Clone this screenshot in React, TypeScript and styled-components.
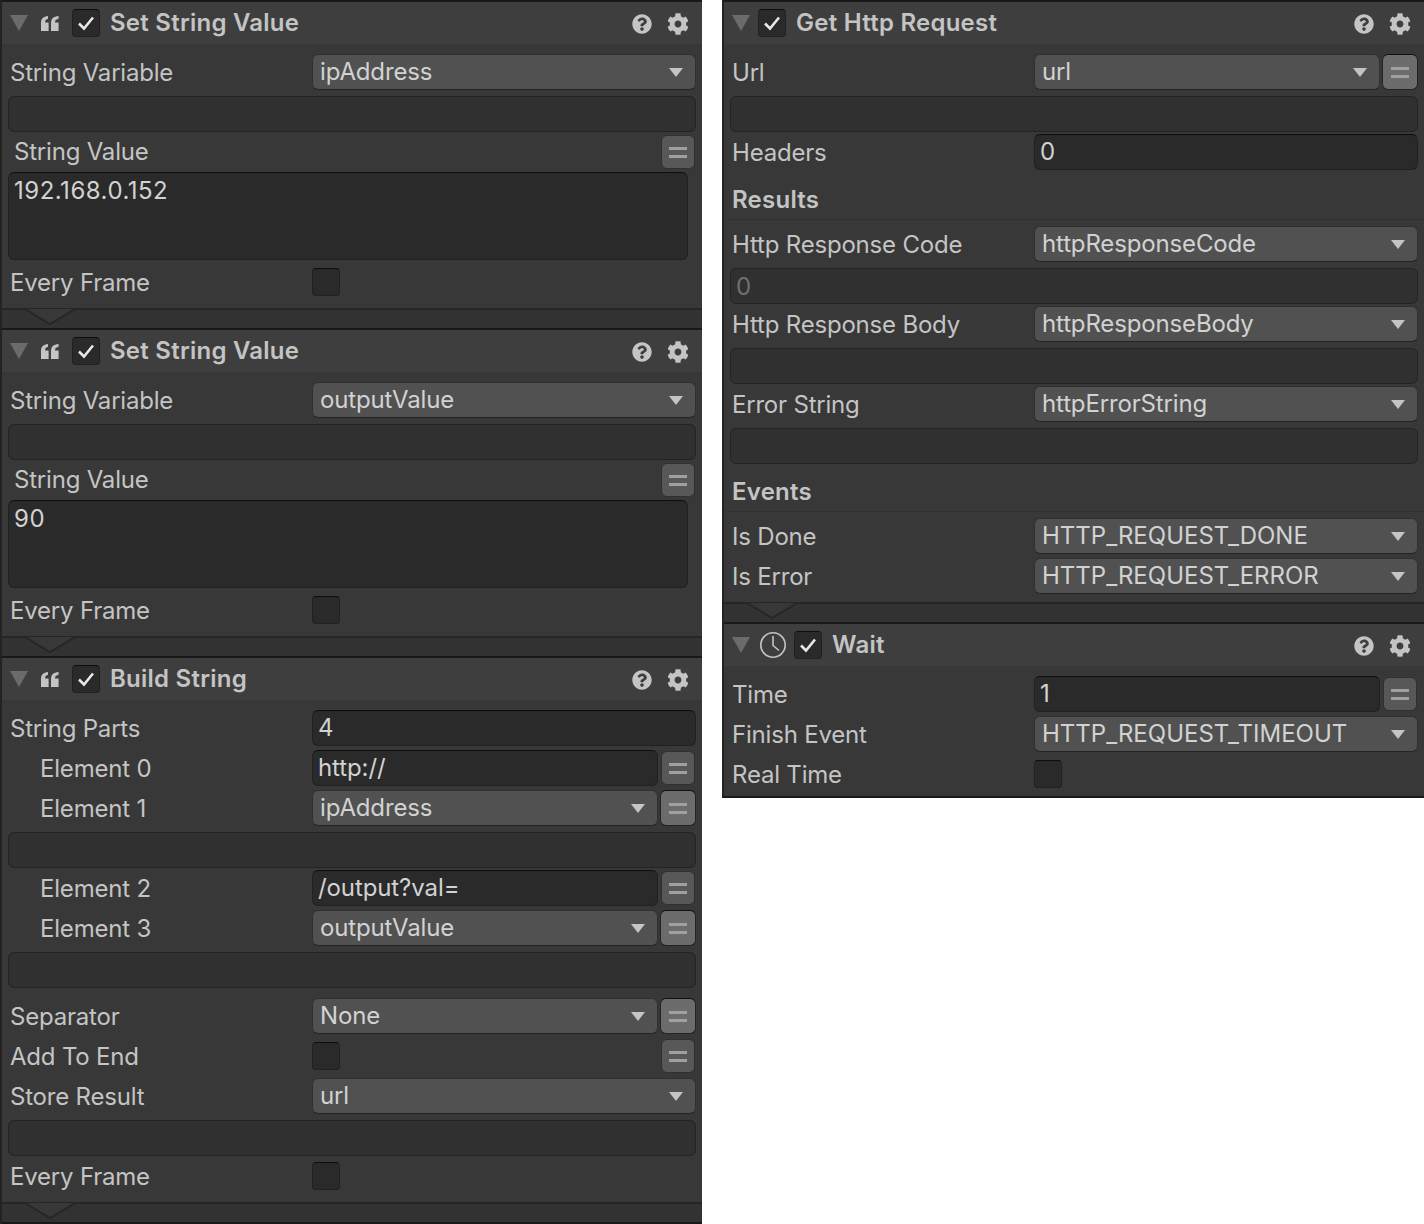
import React from 'react'
import styled, { createGlobalStyle } from 'styled-components'
import { FaCog, FaQuestionCircle } from 'react-icons/fa'

const GlobalStyle = createGlobalStyle`
  html, body {
    margin: 0;
    padding: 0;
    background: #fff;
  }
  * {
    box-sizing: border-box;
  }
`

const Page = styled.div`
  display: flex;
  align-items: flex-start;
  gap: 20px;
  width: 1424px;
  font-family: Inter, 'Noto Sans', sans-serif;
  font-size: 24px;
  color: #c4c4c4;
`

const Panel = styled.div`
  width: 702px;
  flex: none;
  background: #383838;
  border-left: 2px solid #232323;
`

const Header = styled.div`
  display: flex;
  align-items: center;
  height: 44px;
  padding-right: 12px;
  background: #3e3e3e;
  border-top: 2px solid #191919;
`

const Fold = styled.span`
  flex: none;
  width: 0;
  height: 0;
  margin-left: 8px;
  border-left: 9px solid transparent;
  border-right: 9px solid transparent;
  border-top: 16px solid #6b6b6b;
`

const Title = styled.span`
  flex: 1;
  margin-left: 10px;
  font-weight: 600;
  line-height: 28px;
  letter-spacing: 0.25px;
`

const HeaderIcon = styled.span`
  display: flex;
  flex: none;
  width: 24px;
  justify-content: center;
  margin: 2px 0 0 12px;
  color: #c4c4c4;
`

const IconSlot = styled.span`
  display: flex;
  flex: none;
  width: 36px;
  padding-left: 8px;
  justify-content: center;
`

const CheckBox = styled.span<{ $header?: boolean }>`
  display: flex;
  flex: none;
  align-items: center;
  justify-content: center;
  width: 28px;
  height: 28px;
  margin-left: ${p => (p.$header ? '8px' : '0')};
  background: #2a2a2a;
  border: 1px solid #212121;
  border-top-color: #0d0d0d;
  border-radius: 4px;
`

const Body = styled.div`
  padding: 8px 6px 0 0;
`

const Row = styled.div`
  display: flex;
  align-items: center;
  height: 40px;
`

const Label = styled.span<{ $indent?: boolean }>`
  flex: none;
  width: 310px;
  padding: 2px 0 0 ${p => (p.$indent ? '38px' : '8px')};
  line-height: 28px;
  letter-spacing: -0.2px;
`

const Values = styled.div<{ $spread?: boolean }>`
  display: flex;
  flex: 1;
  align-items: center;
  justify-content: ${p => (p.$spread ? 'space-between' : 'flex-start')};
  gap: 2px;
`

const Field = styled.div`
  flex: 1;
  height: 36px;
  padding-left: 5px;
  background: #2a2a2a;
  border: 1px solid #212121;
  border-top-color: #0d0d0d;
  border-radius: 6px;
  line-height: 34px;
  letter-spacing: -0.1px;
  color: #d2d2d2;
`

const Dropdown = styled.div<{ $caps?: boolean }>`
  display: flex;
  flex: 1;
  align-items: center;
  justify-content: space-between;
  height: 36px;
  padding: 0 12px 0 7px;
  background: #515151;
  border: 1px solid #303030;
  border-bottom-color: #242424;
  border-radius: 6px;
  line-height: 34px;
  letter-spacing: ${p => (p.$caps ? '0' : '-0.15px')};
  color: #d2d2d2;
`

const Arrow = styled.span`
  width: 0;
  height: 0;
  border-left: 7px solid transparent;
  border-right: 7px solid transparent;
  border-top: 9px solid #c4c4c4;
`

const ToggleButton = styled.span<{ $active?: boolean }>`
  display: flex;
  flex: none;
  flex-direction: column;
  align-items: center;
  justify-content: center;
  gap: 5px;
  width: ${p => (p.$active ? '36px' : '34px')};
  height: ${p => (p.$active ? '36px' : '34px')};
  margin: ${p => (p.$active ? '0' : '1px')};
  background: ${p => (p.$active ? '#6c6c6c' : '#585858')};
  border: 1px solid ${p => (p.$active ? '#232323' : '#303030')};
  border-top-color: ${p => (p.$active ? '#101010' : '#303030')};
  border-radius: 6px;
`

const ButtonBar = styled.span`
  width: 18px;
  height: 3px;
  background: #a0a0a0;
  filter: blur(0.7px);
`

const Blank = styled.div<{ $spaced?: boolean }>`
  height: 36px;
  margin: 4px 0 ${p => (p.$spaced ? '8px' : '0')} 6px;
  padding-left: 5px;
  background: #303030;
  border: 1px solid #232323;
  border-radius: 6px;
  line-height: 35px;
  color: #6f6f6f;
`

const ValueHead = styled.div`
  display: flex;
  align-items: center;
  justify-content: space-between;
  height: 40px;
  padding-left: 12px;
`

const ValueLabel = styled.span`
  margin-bottom: 1px;
  letter-spacing: -0.2px;
`

const TextArea = styled.div`
  height: 88px;
  margin: 0 8px 2px 6px;
  padding: 2px 5px;
  background: #2a2a2a;
  border: 1px solid #212121;
  border-top-color: #0d0d0d;
  border-radius: 6px;
  line-height: 32px;
  letter-spacing: 0.5px;
  color: #d2d2d2;
`

const Heading = styled.div`
  height: 48px;
  margin: 0 -6px 4px 0;
  padding: 16px 0 0 8px;
  font-weight: 600;
  line-height: 24px;
  letter-spacing: 0.25px;
  border-bottom: 1px solid #323232;
`

const Footer = styled.div<{ $last?: boolean }>`
  position: relative;
  height: ${p => (p.$last ? '22px' : '20px')};
  margin-top: 6px;
  background: #323232;
  border-top: 2px solid #262626;
  border-bottom: ${p => (p.$last ? '2px solid #191919' : '0')};
`

const Notch = styled.svg`
  position: absolute;
  top: -2px;
  left: 22px;
`

const PanelEnd = styled.div`
  height: 4px;
  border-bottom: 2px solid #191919;
`

const Check = () => (
  <svg width="20" height="18" viewBox="0 0 20 18">
    <path d="M3 9.5 L8 14.5 L17 3.5" fill="none" stroke="#e8e8e8" strokeWidth="2.6" />
  </svg>
)

const Quote = () => (
  <IconSlot>
    <svg width="20" height="18" viewBox="0 0 20 18">
      <path
        d="M1 17 V9 C1 4.5 3.5 2.5 8 2 V5 C6 5.3 5 6.2 5 8.5 H8.6 V17 Z M11 17 V9 C11 4.5 13.5 2.5 18.5 2 V5 C16 5.3 15 6.2 15 8.5 H18.6 V17 Z"
        fill="#c4c4c4"
      />
    </svg>
  </IconSlot>
)

const Clock = () => (
  <IconSlot>
    <svg width="28" height="28" viewBox="-1 0 28 28">
      <circle cx="14" cy="14" r="12.2" fill="none" stroke="#c4c4c4" strokeWidth="1.6" />
      <path d="M14 5 V14.5 L20 19.5" fill="none" stroke="#c4c4c4" strokeWidth="1.6" />
    </svg>
  </IconSlot>
)

const ActionHeader = ({ title, icon }: { title: string; icon?: React.ReactNode }) => (
  <Header>
    <Fold />
    {icon}
    <CheckBox $header>
      <Check />
    </CheckBox>
    <Title>{title}</Title>
    <HeaderIcon>
      <FaQuestionCircle size={20} />
    </HeaderIcon>
    <HeaderIcon>
      <FaCog size={22} />
    </HeaderIcon>
  </Header>
)

const Toggle = ({ active }: { active?: boolean }) => (
  <ToggleButton $active={active}>
    <ButtonBar />
    <ButtonBar />
  </ToggleButton>
)

const Select = ({ value, caps }: { value: string; caps?: boolean }) => (
  <Dropdown $caps={caps}>
    {value}
    <Arrow />
  </Dropdown>
)

interface PropRowProps {
  label: string
  indent?: boolean
  children: React.ReactNode
}

const PropRow = ({ label, indent, children }: PropRowProps) => (
  <Row>
    <Label $indent={indent}>{label}</Label>
    <Values>{children}</Values>
  </Row>
)

const ActionFooter = ({ last }: { last?: boolean }) => (
  <Footer $last={last}>
    <Notch width="52" height="18" viewBox="0 0 52 18">
      <path d="M1 1 L26 16 L51 1" fill="#383838" stroke="#262626" strokeWidth="2" />
    </Notch>
  </Footer>
)

const SetStringValue = ({ variable, value }: { variable: string; value: string }) => (
  <>
    <ActionHeader title="Set String Value" icon={<Quote />} />
    <Body>
      <PropRow label="String Variable">
        <Select value={variable} />
      </PropRow>
      <Blank />
      <ValueHead>
        <ValueLabel>String Value</ValueLabel>
        <Toggle />
      </ValueHead>
      <TextArea>{value}</TextArea>
      <PropRow label="Every Frame">
        <CheckBox />
      </PropRow>
    </Body>
    <ActionFooter />
  </>
)

const App = () => (
  <Page>
    <GlobalStyle />
    <Panel>
      <SetStringValue variable="ipAddress" value="192.168.0.152" />
      <SetStringValue variable="outputValue" value="90" />
      <ActionHeader title="Build String" icon={<Quote />} />
      <Body>
        <PropRow label="String Parts">
          <Field>4</Field>
        </PropRow>
        <PropRow label="Element 0" indent>
          <Field>http://</Field>
          <Toggle />
        </PropRow>
        <PropRow label="Element 1" indent>
          <Select value="ipAddress" />
          <Toggle active />
        </PropRow>
        <Blank />
        <PropRow label="Element 2" indent>
          <Field>/output?val=</Field>
          <Toggle />
        </PropRow>
        <PropRow label="Element 3" indent>
          <Select value="outputValue" />
          <Toggle active />
        </PropRow>
        <Blank $spaced />
        <PropRow label="Separator">
          <Select value="None" />
          <Toggle active />
        </PropRow>
        <Row>
          <Label>Add To End</Label>
          <Values $spread>
            <CheckBox />
            <Toggle />
          </Values>
        </Row>
        <PropRow label="Store Result">
          <Select value="url" />
        </PropRow>
        <Blank />
        <PropRow label="Every Frame">
          <CheckBox />
        </PropRow>
      </Body>
      <ActionFooter last />
    </Panel>
    <Panel>
      <ActionHeader title="Get Http Request" />
      <Body>
        <PropRow label="Url">
          <Select value="url" />
          <Toggle active />
        </PropRow>
        <Blank />
        <PropRow label="Headers">
          <Field>0</Field>
        </PropRow>
        <Heading>Results</Heading>
        <PropRow label="Http Response Code">
          <Select value="httpResponseCode" />
        </PropRow>
        <Blank>0</Blank>
        <PropRow label="Http Response Body">
          <Select value="httpResponseBody" />
        </PropRow>
        <Blank />
        <PropRow label="Error String">
          <Select value="httpErrorString" />
        </PropRow>
        <Blank />
        <Heading>Events</Heading>
        <PropRow label="Is Done">
          <Select value="HTTP_REQUEST_DONE" caps />
        </PropRow>
        <PropRow label="Is Error">
          <Select value="HTTP_REQUEST_ERROR" caps />
        </PropRow>
      </Body>
      <ActionFooter />
      <ActionHeader title="Wait" icon={<Clock />} />
      <Body>
        <PropRow label="Time">
          <Field>1</Field>
          <Toggle />
        </PropRow>
        <PropRow label="Finish Event">
          <Select value="HTTP_REQUEST_TIMEOUT" caps />
        </PropRow>
        <PropRow label="Real Time">
          <CheckBox />
        </PropRow>
      </Body>
      <PanelEnd />
    </Panel>
  </Page>
)

export default App
